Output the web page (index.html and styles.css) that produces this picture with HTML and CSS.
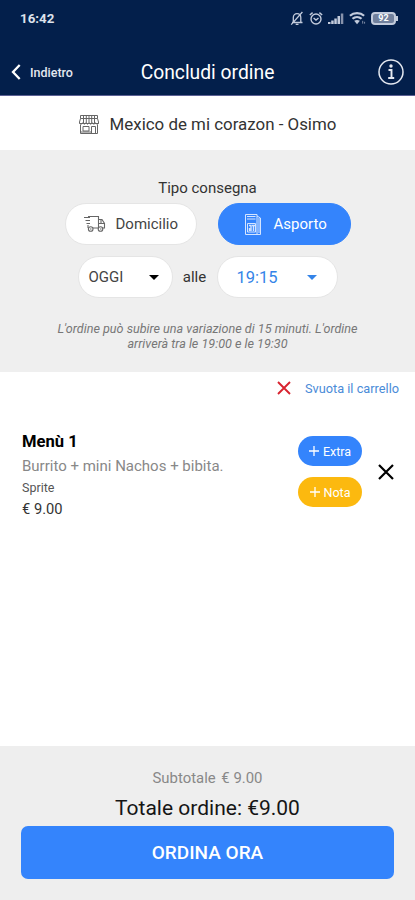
FILE: index.html
```html
<!DOCTYPE html>
<html lang="it">
<head>
    <meta charset="UTF-8">
    <meta name="viewport" content="width=device-width, initial-scale=1.0">
    <title>Concludi ordine</title>
    <link rel="stylesheet" href="styles.css">
</head>
<body>
    <header>
        <div class="status-bar">
            <span class="clock">16:42</span>
            <div class="status-icons">
                <svg width="14" height="15" viewBox="0 0 14 15" fill="none" stroke="#c3cbdc" stroke-width="1.3">
                    <path d="M2 11.5h10.5M3.3 11V6.5C3.3 4 5 2.6 7 2.6s3.8 1.4 3.8 3.9V11M5.7 13.4h2.8M12.4 1L1.2 13.6"/>
                </svg>
                <svg width="14" height="15" viewBox="0 0 14 15" fill="none" stroke="#c3cbdc" stroke-width="1.4">
                    <circle cx="7" cy="8" r="5"/>
                    <path d="M.8 4L3.6 1.6M13.2 4l-2.8-2.4M4.6 7L7 9l2.5-2"/>
                </svg>
                <svg width="16" height="13" viewBox="0 0 16 13" fill="#c3cbdc">
                    <path d="M0 10h2.500v2H0zM3.200 8.500h2.500V12H3.200zM6.300 6.500h2.500V12H6.300zM9.500 4H12v8H9.500z"/>
                    <path d="M12.800 1.500h2.500V12h-2.500z" fill="#8792ab"/>
                </svg>
                <svg width="17" height="14" viewBox="0 0 18 14" fill="none" stroke="#c3cbdc" stroke-width="2.400">
                    <path d="M1 4.600c4-3.600 11-3.600 15 0M3.700 7.800c2.800-2.400 6.800-2.400 9.600 0"/>
                    <path d="M5.500 10q3-2 6 0l-3 3.500z" fill="#c3cbdc" stroke="none"/>
                    <path d="M14.500 10v3M16.500 11v2" stroke-width="1" stroke="#8792ab"/>
                </svg>
                <div class="battery">92</div>
            </div>
        </div>
        <nav>
            <a class="back" href="#">
                <svg width="10" height="16" viewBox="0 0 10 16" fill="none" stroke="#fff" stroke-width="2.300">
                    <path d="M8.700 1L2 8l6.700 7"/>
                </svg>
                Indietro
            </a>
            <h1>Concludi ordine</h1>
            <a class="info" href="#">
                <svg width="26" height="26" viewBox="0 0 26 26" fill="none" stroke="#e4e8f0">
                    <circle cx="13" cy="13" r="12" stroke-width="1.500"/>
                    <path d="M10.500 11h3v7.600M10.200 19h6" stroke-width="1.900"/>
                    <circle cx="13" cy="7" r="1.700" fill="#e4e8f0" stroke="none"/>
                </svg>
            </a>
        </nav>
    </header>

    <div class="store">
        <svg width="20" height="19" viewBox="0 0 20 19" fill="none" stroke="#666" stroke-width="1">
            <path d="M1.500.5h17v3h-17zM1.500 3.500L.5 7v1.500h19V7l-1-3.500M4.500 1v7M7.300 1v7M10 1v7M12.700 1v7M15.500 1v7"/>
            <path d="M.5 8q1.600 2.400 3.200 0 1.600 2.400 3.200 0 1.600 2.400 3.200 0 1.600 2.400 3.200 0 1.600 2.400 3.200 0 1.600 2.400 3.200 0M1.500 9.500v9h17v-9M4 11.500h6v4.500H4zM12.500 18v-6.500h4V18M1 17h11"/>
        </svg>
        <span>Mexico de mi corazon - Osimo</span>
    </div>

    <section class="delivery">
        <h2>Tipo consegna</h2>
        <div class="row types">
            <button class="pill home">
                <svg width="22" height="18" viewBox="0 0 22 18" fill="none" stroke="#666" stroke-width="1.100">
                    <path d="M4 1.500h10.500v11.500H9M14.500 4.500H18l2.500 4V13h-2M14.500 8.500h6M17 4.500v4M0 2.500h6M1.500 5.500H6M2.500 8.500H6M4 10v3M13.500 13h1"/>
                    <circle cx="6.700" cy="14" r="2.300"/>
                    <circle cx="16.500" cy="14" r="2.300"/>
                    <path d="M6 14h1.500M16 14h1.500"/>
                </svg>
                Domicilio
            </button>
            <button class="pill takeaway">
                <svg width="16" height="21" viewBox="0 0 16 21" fill="none" stroke="#d5e5ff" stroke-width="1">
                    <path d="M.5.500h11.500v20H.5zM12 2l3.500 2v16.500H12M14 4v15"/>
                    <path d="M2 2.500h8.500M2 5h8.500M2.500 9.500h8v8.500h-8z"/>
                    <path d="M4 11.500h2V17M8.500 12v5M7 11.500h3.500M4.500 14v3" stroke-width="1.400"/>
                </svg>
                Asporto
            </button>
        </div>
        <div class="row times">
            <button class="pill day">OGGI <i class="caret"></i></button>
            <span class="at">alle</span>
            <button class="pill hour">19:15 <i class="caret"></i></button>
        </div>
        <p class="notice">L'ordine può subire una variazione di 15 minuti. L'ordine<br>arriverà tra le 19:00 e le 19:30</p>
    </section>

    <main>
        <a class="empty-cart" href="#">
            <svg width="14" height="14" viewBox="0 0 14 14" stroke="#d8232f" stroke-width="1.900">
                <path d="M1 1l12 12M13 1L1 13"/>
            </svg>
            <span>Svuota il carrello</span>
        </a>
        <div class="item">
            <div class="item-text">
                <h3>Menù 1</h3>
                <p class="description">Burrito + mini Nachos + bibita.</p>
                <p class="option">Sprite</p>
                <p class="price">€ 9.00</p>
            </div>
            <div class="item-buttons">
                <button class="tag extra"><svg width="10" height="10" viewBox="0 0 10 10" stroke="#fff" stroke-width="1.300"><path d="M0 5h10M5 0v10"/></svg><span>Extra</span></button>
                <button class="tag note"><svg width="10" height="10" viewBox="0 0 10 10" stroke="#fff" stroke-width="1.300"><path d="M0 5h10M5 0v10"/></svg><span>Nota</span></button>
            </div>
            <svg class="remove" width="16" height="16" viewBox="0 0 16 16" stroke="#000" stroke-width="2.200">
                <path d="M1 1l14 14M15 1L1 15"/>
            </svg>
        </div>
    </main>

    <footer>
        <p class="subtotal">Subtotale <span>€ 9.00</span></p>
        <p class="total">Totale ordine: €9.00</p>
        <button class="order">ORDINA ORA</button>
    </footer>
</body>
</html>
```
FILE: styles.css
```css
* {
    box-sizing: border-box;
}

body {
    font-family: Roboto, "Liberation Sans", sans-serif;
    margin: 0;
    height: 900px;
    display: flex;
    flex-direction: column;
    background-color: #fff;
    color: #333;
}

h1, h2, h3, p {
    margin: 0;
    font-weight: 400;
}

a {
    text-decoration: none;
}

svg {
    display: block;
    flex: none;
}

button {
    font-family: inherit;
    border: none;
    padding: 0;
    display: flex;
    align-items: center;
    white-space: nowrap;
    cursor: pointer;
}

header {
    height: 96px;
    background-color: #031f4b;
    border-bottom: 1px solid #5b6094;
    color: #fff;
}

.status-bar {
    height: 36px;
    padding: 0 17px 0 20px;
    display: flex;
    justify-content: space-between;
    align-items: center;
}

.clock {
    font-size: 13.3px;
    font-weight: 700;
    color: #dde2ec;
}

.status-icons {
    display: flex;
    align-items: center;
    gap: 5px;
}

.battery {
    width: 25px;
    height: 13px;
    margin-right: 2px;
    border: 2px solid #c3cbdc;
    border-radius: 4px;
    background-color: #71809d;
    font-size: 9px;
    font-weight: 700;
    line-height: 9px;
    text-align: center;
    position: relative;
}

.battery::after {
    content: "";
    position: absolute;
    right: -4px;
    top: 2px;
    width: 2px;
    height: 5px;
    background-color: #c3cbdc;
}

nav {
    height: 59px;
    padding: 13px 11px 0;
    display: grid;
    grid-template-columns: 1fr auto 1fr;
    align-items: center;
}

.back {
    display: flex;
    align-items: center;
    gap: 9px;
    color: #e4e8f0;
    font-size: 12.5px;
    font-weight: 500;
}

h1 {
    font-size: 19.3px;
}

.info {
    justify-self: end;
}

.store {
    height: 54px;
    display: flex;
    align-items: center;
    justify-content: center;
    gap: 11px;
    font-size: 16.9px;
    padding-top: 2px;
}

.delivery {
    height: 222px;
    padding-top: 28px;
    background-color: #efefef;
    text-align: center;
}

h2 {
    font-size: 15px;
    line-height: 20px;
    margin-bottom: 5px;
}

.row {
    display: flex;
    justify-content: center;
    align-items: center;
}

.pill {
    height: 42px;
    border-radius: 21px;
    background-color: #fff;
    border: 1px solid #e5e5e5;
    color: #444;
    font-size: 15px;
}

.types {
    gap: 21px;
}

.home {
    width: 132px;
    padding-left: 18px;
    gap: 10px;
}

.takeaway {
    width: 133px;
    padding-left: 26px;
    gap: 13px;
    background-color: #3484fc;
    border-color: #3484fc;
    color: #fff;
}

.times {
    margin-top: 11px;
}

.day {
    width: 95px;
    padding: 0 13px 0 10px;
    justify-content: space-between;
}

.hour {
    width: 121px;
    padding: 0 20px 0 19px;
    justify-content: space-between;
    color: #3484e8;
    font-size: 16.5px;
}

.at {
    width: 44px;
    font-size: 15px;
}

.caret {
    border-left: 5px solid transparent;
    border-right: 5px solid transparent;
    border-top: 5px solid #000;
}

.hour .caret {
    border-top-color: #3484e8;
}

.notice {
    margin-top: 23px;
    font-size: 12.6px;
    line-height: 15px;
    font-style: italic;
    color: #777;
}

main {
    flex: 1;
}

.empty-cart {
    display: flex;
    justify-content: flex-end;
    align-items: center;
    gap: 14px;
    height: 32px;
    padding-right: 16px;
    color: #4a8bd8;
    font-size: 12.75px;
}

.item {
    display: flex;
    padding: 27px 21px 0 22px;
}

.item-text {
    flex: 1;
}

h3 {
    font-size: 16.6px;
    font-weight: 700;
    line-height: 22px;
    color: #000;
}

.description {
    font-size: 15px;
    line-height: 26px;
    color: #888;
}

.option {
    font-size: 12.500px;
    line-height: 18px;
    color: #555;
}

.price {
    font-size: 14.7px;
    line-height: 24px;
}

.item-buttons {
    display: flex;
    flex-direction: column;
    gap: 11px;
    margin: 5px 16px 0 0;
}

.tag {
    width: 64px;
    height: 30px;
    border-radius: 15px;
    justify-content: center;
    gap: 4px;
    color: #fff;
    font-size: 12.5px;
}

.extra {
    background-color: #3484fc;
}

.note {
    background-color: #fcb90f;
}

.remove {
    margin-top: 33px;
}

footer {
    height: 154px;
    padding: 20px 21px 0;
    background-color: #eee;
    text-align: center;
}

.subtotal {
    font-size: 14.9px;
    line-height: 24px;
    color: #888;
}

.subtotal span {
    margin-left: 2px;
}

.total {
    font-size: 21px;
    line-height: 36px;
    color: #151515;
}

.order {
    width: 373px;
    height: 53px;
    border-radius: 7px;
    justify-content: center;
    background-color: #3484fc;
    color: #fff;
    font-size: 19px;
    font-weight: 500;
}
```
